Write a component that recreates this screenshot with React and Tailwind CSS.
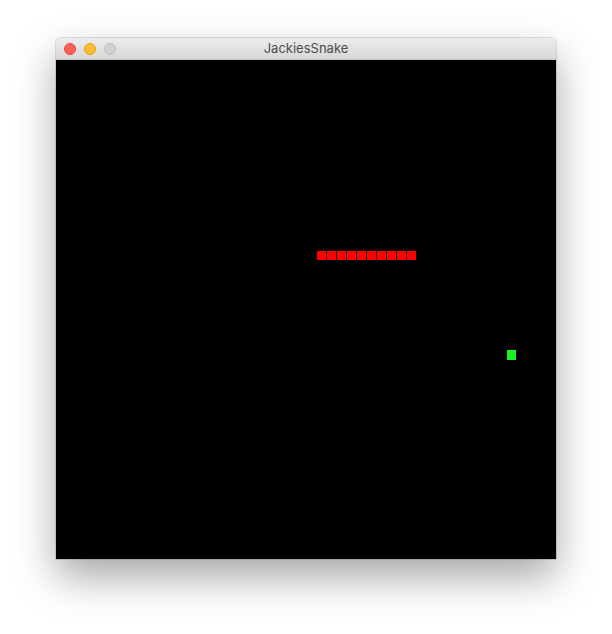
const snake = [0, 1, 2, 3, 4, 5, 6, 7, 8, 9];

export default function App() {
  return (
    <div className="w-[612px] h-[634px] bg-white pt-[38px] pl-[56px]">
      <div className="w-[500px] rounded-t-[5px] shadow-[0_18px_40px_rgba(0,0,0,0.35),0_0_0_1px_rgba(0,0,0,0.12)]">
        {/* Title bar */}
        <div className="relative h-[22px] rounded-t-[5px] bg-gradient-to-b from-[#ececec] to-[#d8d8d8] border-b border-[#c4c4c4] flex items-center">
          <div className="flex items-center gap-[8px] pl-[8px] pt-[1px]">
            <span className="w-[12px] h-[12px] rounded-full bg-[#fd5f57] border border-[#e2463f]" />
            <span className="w-[12px] h-[12px] rounded-full bg-[#febc2e] border border-[#e1a116]" />
            <span className="w-[12px] h-[12px] rounded-full bg-[#d0d0d0] border border-[#bdbdbd]" />
          </div>
          <div className="absolute inset-0 pt-[1px] flex items-center justify-center text-[13px] text-[#4d4d4d] font-['Inter','Liberation_Sans',sans-serif]">
            JackiesSnake
          </div>
        </div>

        {/* Game board */}
        <div className="relative w-[500px] h-[499px] bg-black">
          {snake.map((i) => (
            <div
              key={i}
              className="absolute top-[191px] w-[9px] h-[9px] bg-[#ff0000]"
              style={{ left: 261 + i * 10 }}
            />
          ))}
          <div className="absolute left-[451px] top-[290px] w-[9px] h-[10px] bg-[#1cf21c]" />
        </div>
      </div>
    </div>
  );
}
